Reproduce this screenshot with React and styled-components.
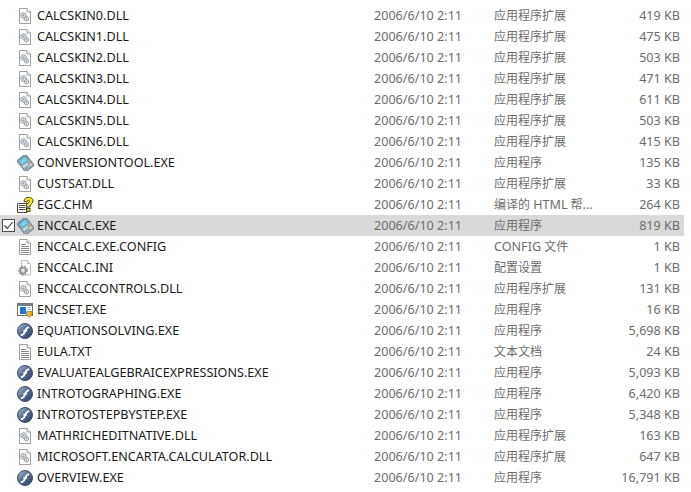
import React from "react";
import styled, { createGlobalStyle } from "styled-components";

const Global = createGlobalStyle`
  html, body { margin: 0; padding: 0; background: #fff; }
  body { width: 691px; height: 492px; overflow: hidden; }
`;

const List = styled.div`
  padding: 5px 7px 0 0;
  display: flex;
  flex-direction: column;
  font-family: "Noto Sans", "Noto Sans CJK SC", sans-serif;
  font-size: 12.6px;
`;

const Row = styled.div`
  display: grid;
  grid-template-columns: 16px 16px 342px 120px 1fr auto;
  height: 21px;
  align-items: center;
  background: ${(p) => (p.$selected ? "#d9d9d9" : "transparent")};
`;

const Check = styled.div`
  margin-left: 2px;
  width: 13px;
  height: 13px;
  box-sizing: border-box;
  border: 1px solid #4d4d4d;
  background: #fff;
  display: flex;
`;

const IconCell = styled.div`
  width: 16px;
  height: 16px;
  margin-left: 1px;
  grid-column: 2;
`;

const Name = styled.div`
  padding-left: 5px;
  color: #1a1a1a;
  white-space: nowrap;
`;

const Muted = styled.div`
  color: #6d6d6d;
  white-space: nowrap;
`;

const Type = styled(Muted)`
  font-size: 12px;
  padding-bottom: 2px;
`;

const Latin = styled.span`
  font-size: 12.6px;
`;

const Size = styled(Muted)`
  text-align: right;
  padding-right: 4px;
`;

const Doc = ({ children }) => (
  <svg width="16" height="16" viewBox="0 0 16 16">
    <path d="M2.5.5h7.500l3.500 3.500v11.500h-11z" fill="#fff" stroke="#a0a0a0" />
    <path d="M10 .5v3.500h3.500" fill="#efefef" stroke="#a0a0a0" />
    {children}
  </svg>
);

const DllIcon = () => (
  <Doc>
    <circle cx="6.500" cy="7.500" r="2.800" fill="#dfe6ec" stroke="#8f9ca8" />
    <circle cx="9.500" cy="10.800" r="2.200" fill="#e8e8e8" stroke="#9c9c9c" />
    <circle cx="6.500" cy="7.500" r="1" fill="#6f93b3" />
    <circle cx="9.500" cy="10.800" r=".7" fill="#8a8a8a" />
  </Doc>
);

const TextIcon = () => (
  <Doc>
    <path d="M4 5.500h5M4 7.500h8M4 9.500h8M4 11.500h8M4 13.500h8" stroke="#8a8a8a" />
  </Doc>
);

const IniIcon = () => (
  <svg width="16" height="16" viewBox="0 0 16 16">
    <path d="M4.500.5h6l3 3v11.500h-9z" fill="#fff" stroke="#bcbcbc" />
    <path d="M10.500.5v3h3" fill="#eee" stroke="#bcbcbc" />
    <circle cx="6" cy="10.500" r="4" fill="none" stroke="#8f8f8f" strokeWidth="1.800" strokeDasharray="1.700 1.100" />
    <circle cx="6" cy="10.500" r="3" fill="#c6c6c6" stroke="#808080" />
    <circle cx="6" cy="10.500" r="1.100" fill="#fff" />
  </svg>
);

const CalcIcon = () => (
  <svg width="17" height="16" viewBox="0 0 17 16">
    <g transform="rotate(-38 8.500 8)">
      <rect x="3" y="1" width="11" height="14" rx="1.500" fill="#a9b3bc" stroke="#6c7a87" />
      <rect x="4.500" y="2.500" width="8" height="5" fill="#79d0ea" stroke="#3f90ad" strokeWidth=".7" />
      <rect x="4.500" y="9" width="2" height="1.600" fill="#f2f2f2" />
      <rect x="7.500" y="9" width="2" height="1.600" fill="#e9e9e9" />
      <rect x="10.500" y="9" width="2" height="1.600" fill="#e58a3a" />
      <rect x="4.500" y="11.800" width="2" height="1.600" fill="#5b9bd5" />
      <rect x="7.500" y="11.800" width="2" height="1.600" fill="#7cb95c" />
      <rect x="10.500" y="11.800" width="2" height="1.600" fill="#d9d9d9" />
    </g>
  </svg>
);

const HelpIcon = () => (
  <svg width="17" height="16" viewBox="0 0 17 16">
    <path d="M.5 6.500h9.500v9H.5z" fill="#fff" stroke="#4f4f4f" />
    <path d="M2 8.500h6.500M2 10.500h6.500M2 12.500h6.500" stroke="#4f4f4f" />
    <path
      d="M7 4.500C7-1 16-1 16 4c0 2.500-3 3-3 5v1h-3.500V8.500c0-2.500 3-2.800 3-4.200 0-1.400-2.500-1.400-2.500.7z"
      fill="#f8e71c"
      stroke="#2b2b00"
      strokeWidth=".9"
    />
    <rect x="9.500" y="11.300" width="3.500" height="3" fill="#f8e71c" stroke="#2b2b00" strokeWidth=".9" />
  </svg>
);

const WindowIcon = () => (
  <svg width="16" height="16" viewBox="0 0 16 16">
    <rect x=".5" y="1.500" width="15" height="12" fill="#fff" stroke="#6a7480" />
    <rect x="1" y="2" width="14" height="2" fill="#74808e" />
    <rect x="3" y="5" width="6" height="7" fill="#1f78d1" />
    <path d="M10.500 5.500h3M10.500 7.500h3" stroke="#a5adb5" />
    <path d="M9.500 9.500h5.500v3.500l-2.750 2.500L9.500 13z" fill="#f2b22f" stroke="#9c6a10" strokeWidth=".6" />
  </svg>
);

const FlashIcon = () => (
  <svg width="16" height="16" viewBox="0 0 16 16">
    <defs>
      <linearGradient id="fl" x1="0" y1="0" x2="1" y2="1">
        <stop offset="0" stopColor="#b7c2d2" />
        <stop offset=".45" stopColor="#566e96" />
        <stop offset="1" stopColor="#2b3f66" />
      </linearGradient>
    </defs>
    <circle cx="8" cy="8" r="7.500" fill="url(#fl)" stroke="#3d4d69" />
    <path
      d="M3.800 12.300c2.900-.2 3.700-2 4.300-4.200.6-2 1.400-3.600 4.100-4"
      fill="none"
      stroke="#fff"
      strokeWidth="1.900"
    />
    <path d="M6.300 7.800h3.800" stroke="#fff" strokeWidth="1.500" />
  </svg>
);

const icons = { dll: DllIcon, txt: TextIcon, ini: IniIcon, calc: CalcIcon, help: HelpIcon, win: WindowIcon, fl: FlashIcon };

const DLL = "应用程序扩展";
const APP = "应用程序";
const CHM = (
  <>
    编译的 <Latin>HTML</Latin> 帮<Latin>...</Latin>
  </>
);
const CONFIG = (
  <>
    <Latin>CONFIG</Latin> 文件
  </>
);

const files = [
  ["dll", "CALCSKIN0.DLL", DLL, "419 KB"],
  ["dll", "CALCSKIN1.DLL", DLL, "475 KB"],
  ["dll", "CALCSKIN2.DLL", DLL, "503 KB"],
  ["dll", "CALCSKIN3.DLL", DLL, "471 KB"],
  ["dll", "CALCSKIN4.DLL", DLL, "611 KB"],
  ["dll", "CALCSKIN5.DLL", DLL, "503 KB"],
  ["dll", "CALCSKIN6.DLL", DLL, "415 KB"],
  ["calc", "CONVERSIONTOOL.EXE", APP, "135 KB"],
  ["dll", "CUSTSAT.DLL", DLL, "33 KB"],
  ["help", "EGC.CHM", CHM, "264 KB"],
  ["calc", "ENCCALC.EXE", APP, "819 KB", true],
  ["txt", "ENCCALC.EXE.CONFIG", CONFIG, "1 KB"],
  ["ini", "ENCCALC.INI", "配置设置", "1 KB"],
  ["dll", "ENCCALCCONTROLS.DLL", DLL, "131 KB"],
  ["win", "ENCSET.EXE", APP, "16 KB"],
  ["fl", "EQUATIONSOLVING.EXE", APP, "5,698 KB"],
  ["txt", "EULA.TXT", "文本文档", "24 KB"],
  ["fl", "EVALUATEALGEBRAICEXPRESSIONS.EXE", APP, "5,093 KB"],
  ["fl", "INTROTOGRAPHING.EXE", APP, "6,420 KB"],
  ["fl", "INTROTOSTEPBYSTEP.EXE", APP, "5,348 KB"],
  ["dll", "MATHRICHEDITNATIVE.DLL", DLL, "163 KB"],
  ["dll", "MICROSOFT.ENCARTA.CALCULATOR.DLL", DLL, "647 KB"],
  ["fl", "OVERVIEW.EXE", APP, "16,791 KB"],
];

export default function App() {
  return (
    <>
      <Global />
      <List>
        {files.map(([icon, name, type, size, selected]) => {
          const Icon = icons[icon];
          return (
            <Row key={name} $selected={selected}>
              {selected ? (
                <Check>
                  <svg width="11" height="11" viewBox="0 0 11 11">
                    <path d="M1.500 5.500l3 3 5-6.500" fill="none" stroke="#333" strokeWidth="1.100" />
                  </svg>
                </Check>
              ) : null}
              <IconCell>
                <Icon />
              </IconCell>
              <Name>{name}</Name>
              <Muted>2006/6/10 2:11</Muted>
              <Type>{type}</Type>
              <Size>{size}</Size>
            </Row>
          );
        })}
      </List>
    </>
  );
}
